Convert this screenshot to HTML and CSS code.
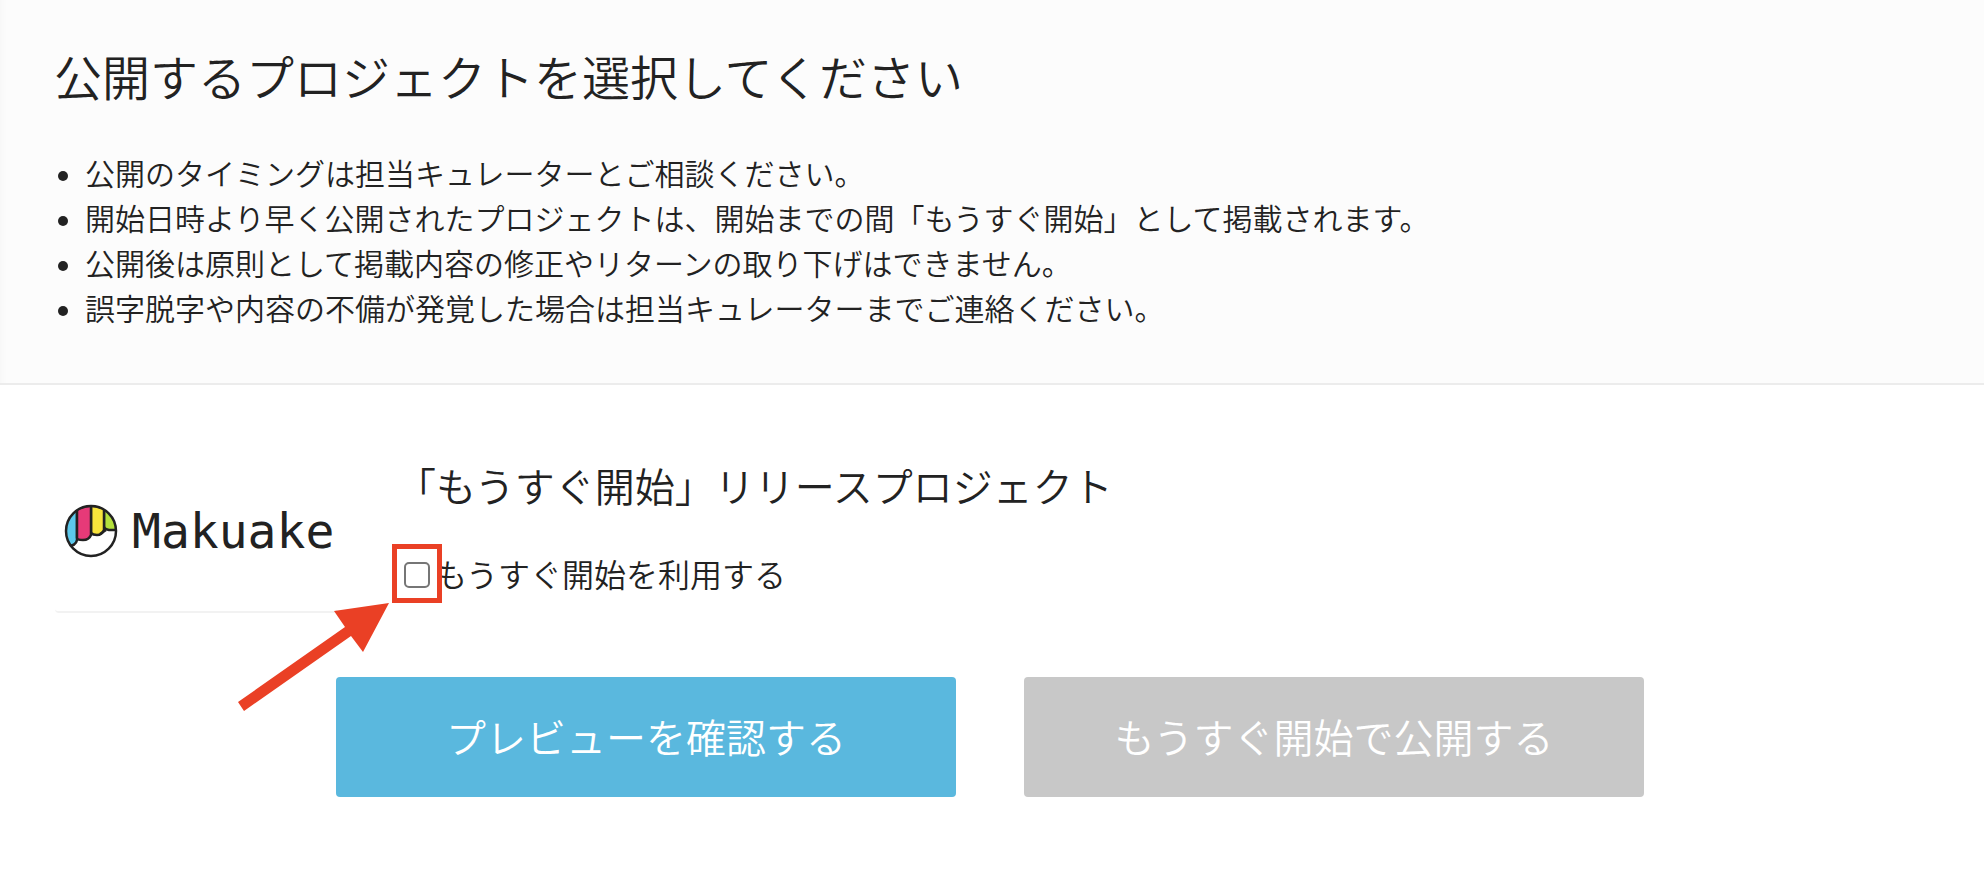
FILE: index.html
```html
<!DOCTYPE html>
<html lang="ja">
<head>
    <meta charset="UTF-8">
    <meta name="viewport" content="width=device-width, initial-scale=1.0">
    <title>プロジェクトの公開</title>
    <link rel="stylesheet" href="styles.css">
</head>
<body>
    <header class="guide">
        <h1>公開するプロジェクトを選択してください</h1>
        <ul class="guide-list">
            <li>公開のタイミングは担当キュレーターとご相談ください。</li>
            <li>開始日時より早く公開されたプロジェクトは、開始までの間「もうすぐ開始」として掲載されます。</li>
            <li>公開後は原則として掲載内容の修正やリターンの取り下げはできません。</li>
            <li>誤字脱字や内容の不備が発覚した場合は担当キュレーターまでご連絡ください。</li>
        </ul>
    </header>
    <main>
        <div class="project">
            <div class="thumbnail">
                <svg class="logo" viewBox="0 0 54 54" aria-hidden="true">
                    <clipPath id="circle"><circle cx="27" cy="27" r="25"/></clipPath>
                    <g clip-path="url(#circle)" stroke="#222" stroke-width="2.5">
                        <path fill="#5cc8ec" d="M-2 0H13V36Q12 42 3 42L-2 40Z"/>
                        <path fill="#b4e03c" d="M40 0H56V26H45Q40 25 40 22Z"/>
                        <path fill="#f8e43c" d="M27 0H40V26Q38 31 33 31Q29 31 27 29Z"/>
                        <path fill="#e63a78" d="M13 0H27V31Q25 36 19 36Q13 36 13 34Z"/>
                        <path fill="none" d="M36 30L42 26"/>
                    </g>
                    <circle cx="27" cy="27" r="25" fill="none" stroke="#222" stroke-width="2.5"/>
                </svg>
                <span class="logo-name">Makuake</span>
            </div>
            <div class="project-info">
                <h2>「もうすぐ開始」リリースプロジェクト</h2>
                <div class="option">
                    <input type="checkbox" id="soon">
                    <label for="soon">もうすぐ開始を利用する</label>
                    <span class="highlight"></span>
                    <svg class="arrow" viewBox="0 0 152 110" aria-hidden="true">
                        <path fill="#ea4025" d="M151 1L96 9L107 25L0 100L6 109L113 34L125 50Z"/>
                    </svg>
                </div>
            </div>
        </div>
        <div class="buttons">
            <button type="button" class="button preview">プレビューを確認する</button>
            <button type="button" class="button publish" disabled>もうすぐ開始で公開する</button>
        </div>
    </main>
</body>
</html>
```
FILE: styles.css
```css
* {
    box-sizing: border-box;
}

body {
    margin: 0;
    font-family: "Noto Sans CJK JP", sans-serif;
    font-weight: 350;
    color: #222;
    background: #fff;
}

h1,
h2,
ul {
    margin: 0;
    padding: 0;
    font-weight: 350;
}

.guide {
    padding: 39px 54px 53px;
    background: #fcfcfc;
    border-bottom: 2px solid #ececec;
    box-shadow: inset 8px 0 8px -8px #f4f4f4;
}

h1 {
    font-size: 48px;
    line-height: 72px;
}

.guide-list {
    margin-top: 39px;
    list-style: none;
    font-size: 30px;
    line-height: 45px;
}

.guide-list li {
    display: flex;
    align-items: center;
    gap: 17px;
}

.guide-list li::before {
    content: "";
    flex: none;
    width: 10px;
    height: 10px;
    margin: 6px 0 0 4px;
    border-radius: 50%;
    background: #222;
}

.project {
    display: flex;
    gap: 59px;
    padding: 66px 55px 0;
}

.thumbnail {
    display: flex;
    flex: none;
    align-items: center;
    gap: 14px;
    width: 282px;
    height: 162px;
    padding-left: 9px;
    border-bottom: 2px solid #f2f2f2;
    border-radius: 4px;
}

.logo {
    flex: none;
    width: 54px;
    height: 54px;
}

.logo-name {
    font-family: "DejaVu Sans Mono", monospace;
    font-size: 48px;
    font-weight: 400;
    line-height: 54px;
}

h2 {
    padding-top: 4px;
    font-size: 40px;
    line-height: 60px;
}

.option {
    display: flex;
    position: relative;
    align-items: center;
    gap: 5px;
    margin-top: 36px;
    padding-left: 8px;
    font-size: 32px;
    line-height: 44px;
}

.option input {
    appearance: none;
    width: 26px;
    height: 26px;
    margin: 4px 0 0;
    border: 2px solid #767676;
    border-radius: 5px;
    background: #fff;
}

/* callout drawn over the checkbox */
.highlight {
    position: absolute;
    top: -7px;
    left: -4px;
    width: 50px;
    height: 59px;
    border: 5px solid #ea4025;
    pointer-events: none;
}

.arrow {
    position: absolute;
    top: 51px;
    left: -158px;
    width: 152px;
    height: 110px;
    pointer-events: none;
}

.buttons {
    display: flex;
    justify-content: center;
    gap: 68px;
    padding: 64px 4px 95px 0;
}

.button {
    width: 620px;
    height: 120px;
    padding: 0 0 2px;
    border: none;
    border-radius: 4px;
    font-family: inherit;
    font-size: 40px;
    font-weight: 350;
    color: #fff;
    cursor: pointer;
}

.preview {
    background: #5ab8de;
}

.publish {
    background: #c8c8c8;
    cursor: default;
}
```
